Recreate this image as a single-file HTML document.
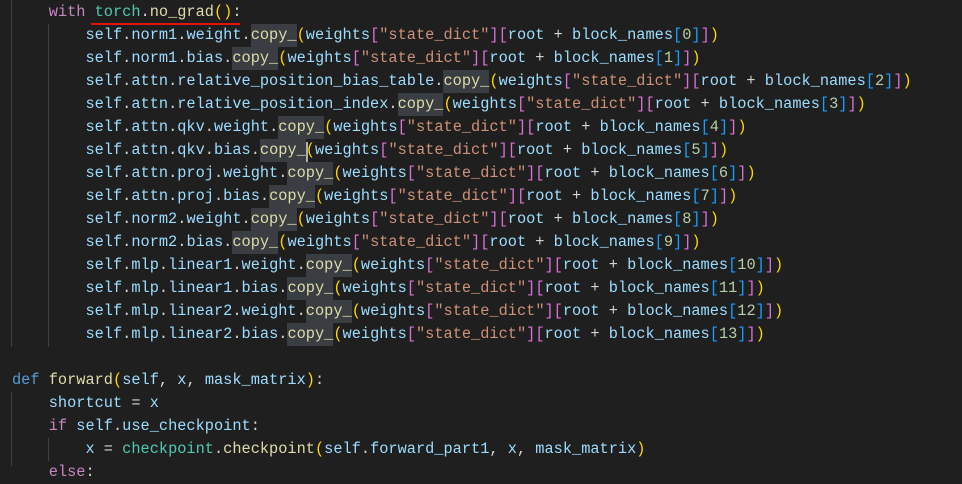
<!DOCTYPE html>
<html><head><meta charset="utf-8"><style>
html,body{margin:0;padding:0;background:#1f1f1f;width:962px;height:466px;overflow:hidden}
pre{position:absolute;left:12px;top:1px;margin:0;font-family:"Liberation Mono",monospace;font-size:15.3px;line-height:23px;color:#d4d4d4;white-space:pre}
.v{color:#9cdcfe}.f{color:#dcdcaa}.s{color:#ce9178}.a{color:#ffd700}.b{color:#da70d6}.c{color:#179fff}.n{color:#b5cea8}.k{color:#c586c0}.d{color:#569cd6}.t{color:#4ec9b0}
.h{display:inline-block;line-height:23px;background:#3a3d41}
.g{position:absolute;width:1px;background:#404040}
.u{position:absolute;left:91px;top:23px;width:149px;height:2px;background:#e51400}
.cur{position:absolute;left:306px;top:142px;width:2px;height:20px;background:#aeafad}
</style></head><body>
<div class="g" style="left:11px;top:0;height:347px"></div>
<div class="g" style="left:48px;top:24px;height:323px"></div>
<div class="g" style="left:11px;top:392px;height:74px"></div>
<div class="g" style="left:48px;top:438px;height:23px"></div>
<pre>    <span class="k">with</span> <span class="t">torch</span>.<span class="f">no_grad</span><span class="a">()</span>:
        <span class="v">self</span>.<span class="v">norm1</span>.<span class="v">weight</span>.<span class="f h">copy_</span><span class="a">(</span><span class="v">weights</span><span class="b">[</span><span class="s">"state_dict"</span><span class="b">][</span><span class="v">root</span> + <span class="v">block_names</span><span class="c">[</span><span class="n">0</span><span class="c">]</span><span class="b">]</span><span class="a">)</span>
        <span class="v">self</span>.<span class="v">norm1</span>.<span class="v">bias</span>.<span class="f h">copy_</span><span class="a">(</span><span class="v">weights</span><span class="b">[</span><span class="s">"state_dict"</span><span class="b">][</span><span class="v">root</span> + <span class="v">block_names</span><span class="c">[</span><span class="n">1</span><span class="c">]</span><span class="b">]</span><span class="a">)</span>
        <span class="v">self</span>.<span class="v">attn</span>.<span class="v">relative_position_bias_table</span>.<span class="f h">copy_</span><span class="a">(</span><span class="v">weights</span><span class="b">[</span><span class="s">"state_dict"</span><span class="b">][</span><span class="v">root</span> + <span class="v">block_names</span><span class="c">[</span><span class="n">2</span><span class="c">]</span><span class="b">]</span><span class="a">)</span>
        <span class="v">self</span>.<span class="v">attn</span>.<span class="v">relative_position_index</span>.<span class="f h">copy_</span><span class="a">(</span><span class="v">weights</span><span class="b">[</span><span class="s">"state_dict"</span><span class="b">][</span><span class="v">root</span> + <span class="v">block_names</span><span class="c">[</span><span class="n">3</span><span class="c">]</span><span class="b">]</span><span class="a">)</span>
        <span class="v">self</span>.<span class="v">attn</span>.<span class="v">qkv</span>.<span class="v">weight</span>.<span class="f h">copy_</span><span class="a">(</span><span class="v">weights</span><span class="b">[</span><span class="s">"state_dict"</span><span class="b">][</span><span class="v">root</span> + <span class="v">block_names</span><span class="c">[</span><span class="n">4</span><span class="c">]</span><span class="b">]</span><span class="a">)</span>
        <span class="v">self</span>.<span class="v">attn</span>.<span class="v">qkv</span>.<span class="v">bias</span>.<span class="f h">copy_</span><span class="a">(</span><span class="v">weights</span><span class="b">[</span><span class="s">"state_dict"</span><span class="b">][</span><span class="v">root</span> + <span class="v">block_names</span><span class="c">[</span><span class="n">5</span><span class="c">]</span><span class="b">]</span><span class="a">)</span>
        <span class="v">self</span>.<span class="v">attn</span>.<span class="v">proj</span>.<span class="v">weight</span>.<span class="f h">copy_</span><span class="a">(</span><span class="v">weights</span><span class="b">[</span><span class="s">"state_dict"</span><span class="b">][</span><span class="v">root</span> + <span class="v">block_names</span><span class="c">[</span><span class="n">6</span><span class="c">]</span><span class="b">]</span><span class="a">)</span>
        <span class="v">self</span>.<span class="v">attn</span>.<span class="v">proj</span>.<span class="v">bias</span>.<span class="f h">copy_</span><span class="a">(</span><span class="v">weights</span><span class="b">[</span><span class="s">"state_dict"</span><span class="b">][</span><span class="v">root</span> + <span class="v">block_names</span><span class="c">[</span><span class="n">7</span><span class="c">]</span><span class="b">]</span><span class="a">)</span>
        <span class="v">self</span>.<span class="v">norm2</span>.<span class="v">weight</span>.<span class="f h">copy_</span><span class="a">(</span><span class="v">weights</span><span class="b">[</span><span class="s">"state_dict"</span><span class="b">][</span><span class="v">root</span> + <span class="v">block_names</span><span class="c">[</span><span class="n">8</span><span class="c">]</span><span class="b">]</span><span class="a">)</span>
        <span class="v">self</span>.<span class="v">norm2</span>.<span class="v">bias</span>.<span class="f h">copy_</span><span class="a">(</span><span class="v">weights</span><span class="b">[</span><span class="s">"state_dict"</span><span class="b">][</span><span class="v">root</span> + <span class="v">block_names</span><span class="c">[</span><span class="n">9</span><span class="c">]</span><span class="b">]</span><span class="a">)</span>
        <span class="v">self</span>.<span class="v">mlp</span>.<span class="v">linear1</span>.<span class="v">weight</span>.<span class="f h">copy_</span><span class="a">(</span><span class="v">weights</span><span class="b">[</span><span class="s">"state_dict"</span><span class="b">][</span><span class="v">root</span> + <span class="v">block_names</span><span class="c">[</span><span class="n">10</span><span class="c">]</span><span class="b">]</span><span class="a">)</span>
        <span class="v">self</span>.<span class="v">mlp</span>.<span class="v">linear1</span>.<span class="v">bias</span>.<span class="f h">copy_</span><span class="a">(</span><span class="v">weights</span><span class="b">[</span><span class="s">"state_dict"</span><span class="b">][</span><span class="v">root</span> + <span class="v">block_names</span><span class="c">[</span><span class="n">11</span><span class="c">]</span><span class="b">]</span><span class="a">)</span>
        <span class="v">self</span>.<span class="v">mlp</span>.<span class="v">linear2</span>.<span class="v">weight</span>.<span class="f h">copy_</span><span class="a">(</span><span class="v">weights</span><span class="b">[</span><span class="s">"state_dict"</span><span class="b">][</span><span class="v">root</span> + <span class="v">block_names</span><span class="c">[</span><span class="n">12</span><span class="c">]</span><span class="b">]</span><span class="a">)</span>
        <span class="v">self</span>.<span class="v">mlp</span>.<span class="v">linear2</span>.<span class="v">bias</span>.<span class="f h">copy_</span><span class="a">(</span><span class="v">weights</span><span class="b">[</span><span class="s">"state_dict"</span><span class="b">][</span><span class="v">root</span> + <span class="v">block_names</span><span class="c">[</span><span class="n">13</span><span class="c">]</span><span class="b">]</span><span class="a">)</span>

<span class="d">def</span> <span class="f">forward</span><span class="a">(</span><span class="v">self</span>, <span class="v">x</span>, <span class="v">mask_matrix</span><span class="a">)</span>:
    <span class="v">shortcut</span> = <span class="v">x</span>
    <span class="k">if</span> <span class="v">self</span>.<span class="v">use_checkpoint</span>:
        <span class="v">x</span> = <span class="t">checkpoint</span>.<span class="f">checkpoint</span><span class="a">(</span><span class="v">self</span>.<span class="v">forward_part1</span>, <span class="v">x</span>, <span class="v">mask_matrix</span><span class="a">)</span>
    <span class="k">else</span>:</pre>
<div class="u"></div>
<div class="cur"></div>
</body></html>
